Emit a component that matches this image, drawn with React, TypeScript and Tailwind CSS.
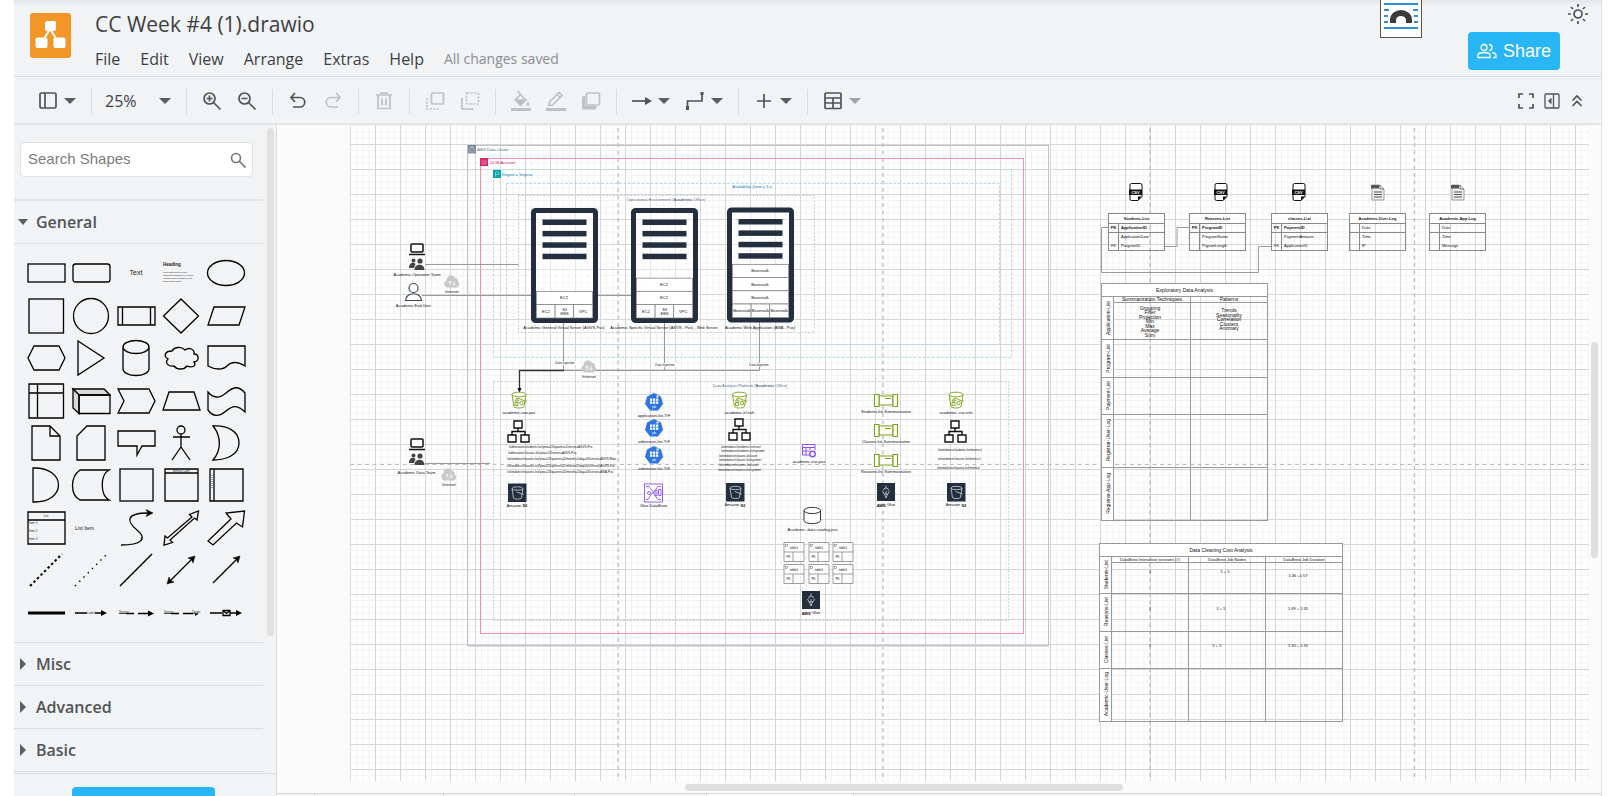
import React from "react";

const ui = "font-['Open_Sans','Noto_Sans',sans-serif]";
const arial = "font-['Liberation_Sans',Arial,sans-serif]";

/* ---------- toolbar ---------- */

function Caret({ muted = false }: { muted?: boolean }) {
  return (
    <svg width="12" height="6" viewBox="0 0 12 6" className={muted ? "text-[#a0a2a5]" : "text-[#5a5d61]"}>
      <path d="M0 0h12L6 6z" fill="currentColor" />
    </svg>
  );
}

function Sep() {
  return <div className="ml-2 mr-[7px] h-[25px] w-px shrink-0 bg-[#dadce0]" />;
}

function Tool({ label, muted = false, children }: { label: string; muted?: boolean; children: React.ReactNode }) {
  return (
    <button
      aria-label={label}
      className={`flex h-8 w-[35px] shrink-0 items-center justify-center ${muted ? "text-[#bfc1c3]" : "text-[#505357]"}`}
    >
      <svg width="20" height="20" viewBox="0 0 20 20" fill="none" stroke="currentColor" strokeWidth="1.7">
        {children}
      </svg>
    </button>
  );
}

function MenuTool({ label, muted = false, children }: { label: string; muted?: boolean; children: React.ReactNode }) {
  return (
    <button aria-label={label} className="flex h-8 w-[53px] shrink-0 items-center gap-[6px] pl-2 text-[#505357]">
      <svg width="20" height="20" viewBox="0 0 20 20" fill="none" stroke="currentColor" strokeWidth="1.7">
        {children}
      </svg>
      <Caret muted={muted} />
    </button>
  );
}

function Toolbar() {
  return (
    <div className="flex h-[48px] shrink-0 items-center border-b-2 border-[#e3e5e7] pl-4 pr-[17px] pt-[2px]">
      <MenuTool label="View">
        <rect x="2" y="2" width="16" height="15" rx="1.5" />
        <path d="M7 2v15" />
      </MenuTool>
      <Sep />
      <button className="flex h-8 w-[79px] shrink-0 items-center justify-between pl-[6px] pr-[7px] text-[16px] text-[#3c3f43]">
        25% <Caret />
      </button>
      <Sep />
      <Tool label="Zoom In">
        <circle cx="7.500" cy="7.500" r="5.500" />
        <path d="M11.500 11.500l7 7M4.500 7.500h6M7.500 4.500v6" />
      </Tool>
      <Tool label="Zoom Out">
        <circle cx="7.500" cy="7.500" r="5.500" />
        <path d="M11.500 11.500l7 7M4.500 7.500h6" />
      </Tool>
      <Sep />
      <Tool label="Undo">
        <path d="M7 2L3 6.500L7 11M3.500 6.500H12a4.500 4.500 0 0 1 0 9.500H5" />
      </Tool>
      <Tool label="Redo" muted>
        <path d="M13 2l4 4.500L13 11M16.500 6.500H8a4.500 4.500 0 0 0 0 9.500h7" />
      </Tool>
      <Sep />
      <Tool label="Delete" muted>
        <path d="M2 4h16M7 4V2h6v2M4 4v13.500h12V4M8 7.500v7M12 7.500v7" />
      </Tool>
      <Sep />
      <Tool label="To Front" muted>
        <rect x="6.500" y="2" width="12" height="11" rx="1" />
        <path d="M2 7v11h11.500" strokeDasharray="2 1.500" />
      </Tool>
      <Tool label="To Back" muted>
        <rect x="6.500" y="2" width="12" height="11" rx="1" strokeDasharray="2 1.500" />
        <path d="M2 7v11h11.500" />
      </Tool>
      <Sep />
      <Tool label="Fill Color" muted>
        <path d="M9.500 3.500l5 5.500-5 5-5-5z" />
        <path d="M4.500 9h10l-5 5z" fill="currentColor" />
        <path d="M10 4L6.500 0" />
        <path d="M17 10.500c1 1.500 1.500 2 1.500 3a1.500 1.500 0 0 1-3 0c0-1 .5-1.500 1.500-3z" fill="currentColor" stroke="none" />
        <path d="M0 18.500h20" strokeWidth="3" />
      </Tool>
      <Tool label="Line Color" muted>
        <path d="M3 14.500l.5-3.500L13 1.500l3 3-9.500 9.500zM11 3.500l3 3" />
        <path d="M0 18.500h20" strokeWidth="3" />
      </Tool>
      <Tool label="Shadow" muted>
        <rect x="5.500" y="2" width="13" height="12" rx="1.500" />
        <path d="M4.500 5H2.500a1.500 1.500 0 0 0-1.500 1.500V17a1.500 1.500 0 0 0 1.500 1.500H14a1.500 1.500 0 0 0 1.500-1.500v-2h-11z" fill="currentColor" stroke="none" />
      </Tool>
      <Sep />
      <MenuTool label="Connection">
        <path d="M0 10h15" />
        <path d="M13 6l7 4-7 4z" fill="currentColor" stroke="none" />
      </MenuTool>
      <MenuTool label="Waypoints">
        <path d="M2.500 16V10H17V3" />
        <path d="M1 15h3v4h-3zM15.500 1h3v3h-3z" fill="currentColor" stroke="none" />
      </MenuTool>
      <Sep />
      <MenuTool label="Insert">
        <path d="M10 3v14M3 10h14" />
      </MenuTool>
      <Sep />
      <MenuTool label="Table" muted>
        <rect x="2" y="2" width="16" height="15.500" rx="1" />
        <path d="M2 7h16M2 12h16M10 7v10.500" />
      </MenuTool>
      <div className="ml-auto flex items-center gap-[10px] text-[#505357]">
        <button aria-label="Fullscreen">
          <svg width="16" height="16" viewBox="0 0 16 16" fill="none" stroke="currentColor" strokeWidth="1.700">
            <path d="M1 5V1h4M11 1h4v4M15 11v4h-4M5 15H1v-4" />
          </svg>
        </button>
        <button aria-label="Format">
          <svg width="16" height="16" viewBox="0 0 16 16" fill="none" stroke="currentColor" strokeWidth="1.300">
            <rect x="1" y="1" width="14" height="14" rx="1" />
            <path d="M9.500 1v14" />
            <path d="M7.500 4.500v7L4 8z" fill="currentColor" stroke="none" />
          </svg>
        </button>
        <button aria-label="Collapse">
          <svg width="14" height="16" viewBox="0 0 14 16" fill="none" stroke="currentColor" strokeWidth="1.600">
            <path d="M2.500 7.500L7 3l4.500 4.500M2.500 13L7 8.500 11.500 13" />
          </svg>
        </button>
      </div>
    </div>
  );
}

/* ---------- header ---------- */

function Header() {
  return (
    <header className="relative flex h-[77px] shrink-0 border-b border-[#d9dbde] bg-linear-to-b from-[#e3e5e7] to-[#f1f3f5] to-8%">
      <svg width="41" height="45" viewBox="0 0 41 45" className="ml-4 mt-[13px] shrink-0">
        <rect width="41" height="45" rx="3" fill="#f29627" />
        <path d="M20 16L11.500 30M20 16l9 14" stroke="#fff" strokeWidth="2" />
        <rect x="15" y="8" width="11" height="10" rx="2" fill="#fff" />
        <rect x="5.500" y="24.500" width="12" height="10.500" rx="2" fill="#fff" />
        <rect x="23.500" y="24.500" width="12" height="10.500" rx="2" fill="#fff" />
      </svg>
      <div className="ml-6 flex flex-col pt-2 text-[#3c3f43]">
        <h1 className="text-[21px] leading-8">CC Week #4 (1).drawio</h1>
        <nav className="mt-[7px] flex items-center gap-5 text-[16px] leading-6">
          {["File", "Edit", "View", "Arrange", "Extras", "Help"].map((m) => (
            <button key={m}>{m}</button>
          ))}
          <span className="text-[14px] text-[#8a8d91]">All changes saved</span>
        </nav>
      </div>
      <div className="absolute right-[179px] top-0 flex h-[38px] w-[42px] justify-center border border-t-0 border-[#555] bg-white">
        <svg width="34" height="36" viewBox="0 0 34 36" fill="none">
          <path d="M0 4h34M0 10h5M29 10h5M0 16h4M30 16h4M0 22h4M30 22h4M0 28h34" stroke="#2f8fd3" strokeWidth="2" />
          <path d="M9 23v-3a8 7 0 0 1 16 0v3" stroke="#3b3b3b" strokeWidth="6" />
        </svg>
      </div>
      <button className={`ml-auto mt-8 flex h-[38px] w-[92px] shrink-0 items-center justify-center gap-[6px] rounded-[4px] bg-[#29b6f6] text-[18px] text-white ${arial}`}>
        <svg width="20" height="16" viewBox="0 0 20 16" fill="none" stroke="#fff" strokeWidth="1.300">
          <circle cx="7" cy="4.500" r="3" />
          <path d="M1 14.500V12c0-1.500 3-2.500 6-2.500s6 1 6 2.500v2.500zM12 1.500a3 3 0 0 1 0 6M15 9.500c2.500.5 4 1.500 4 2.500v2.500h-3" />
        </svg>
        Share
      </button>
      <button aria-label="Appearance" className="ml-2 mr-[13px] mt-1 h-5 w-5 shrink-0">
        <svg width="20" height="20" viewBox="0 0 20 20" fill="none" stroke="#505357" strokeWidth="1.700">
          <circle cx="10" cy="10" r="4" />
          <path d="M10 0v3M10 17v3M0 10h3M17 10h3M3 3l2 2M15 15l2 2M17 3l-2 2M5 15l-2 2" />
        </svg>
      </button>
    </header>
  );
}

/* ---------- shape palette ---------- */

const tiny = { fill: "#222", stroke: "none", fontFamily: "Liberation Sans, Arial, sans-serif" };

const shapes: [string, React.ReactNode][] = [
  ["Rectangle", <rect x="2" y="11" width="37" height="18" />],
  ["Rounded Rectangle", <rect x="2" y="11" width="37" height="18" rx="2.500" />],
  ["Text", <text x="20" y="22" fontSize="7" textAnchor="middle" {...tiny}>Text</text>],
  [
    "Textbox",
    <g {...tiny} fontSize="2">
      <text x="2" y="13" fontSize="4.500" fontWeight="bold">Heading</text>
      <text x="2" y="20">Lorem ipsum dolor sit amet</text>
      <text x="2" y="22.500">consectetur adipisicing elit, sed do</text>
      <text x="2" y="26">eiusmod tempor incididunt ut lab</text>
      <text x="2" y="28.500">dolore magna aliqua.</text>
    </g>,
  ],
  ["Ellipse", <ellipse cx="20" cy="20" rx="18.500" ry="12.500" />],
  ["Square", <rect x="3" y="3" width="34.500" height="34" />],
  ["Circle", <circle cx="20" cy="20" r="17.500" />],
  ["Process", <path d="M2 11h37v18H2zM6.500 11v18M34.500 11v18" />],
  ["Diamond", <path d="M20 3l17.500 17L20 37 2.500 20z" />],
  ["Parallelogram", <path d="M8 11h31l-6 18H2z" />],
  ["Hexagon", <path d="M8 8h25l6 12-6 12H8L2 20z" />],
  ["Triangle", <path d="M7 3l26 17L7 37z" />],
  ["Cylinder", <path d="M7 9a13 6.500 0 0 1 26 0v22a13 6.500 0 0 1-26 0zM7 9a13 6.500 0 0 0 26 0" />],
  ["Cloud", <path d="M11 13c-7 0-9 5-4 8-4 4 1 8 6 7 3 4 10 4 13 0 5 2 10 0 7-4 6-1 5-8 0-8 1-5-5-7-9-4-4-4-11-3-13 1z" />],
  ["Document", <path d="M2 8h37v20c-8-5-14-4-18 0s-12 4-19 0z" />],
  ["Internal Storage", <path d="M3 3h34.500v34H3zM3 12h34.500M11.500 3v34" />],
  ["Cube", <g><path d="M2 8h31l6 6H8z" fill="#d8dadc" /><path d="M2 8l6 6v18.500L2 27z" fill="#d8dadc" /><path d="M8 14h31v18.500H8z" /></g>],
  ["Step", <path d="M2 8h31l6 12-6 12H2l6-12z" />],
  ["Trapezoid", <path d="M8 11h25l6 18H2z" />],
  ["Tape", <path d="M2 11c5 6 11 7 18 1s12-8 19 0v19c-7-7-12-7-19-1s-13 6-18-1z" />],
  ["Note", <path d="M6 3h18l10 10v24H6zM24 3v10h10" />],
  ["Card", <path d="M16 3h18v34H6V13z" />],
  ["Callout", <path d="M2 8h37v15H26l-5 9v-9H2z" />],
  ["Actor", <path d="M16 7a4 4 0 1 0 8 0a4 4 0 1 0-8 0zM20 11v13M12 14h17M20 24l-9 13M20 24l9 13" />],
  ["Or", <path d="M7 3c14-1 26 5 26 17S20 37 7 37c8-9 9-23 0-34z" />],
  ["And", <path d="M7 3c34-1 34 35 0 34z" />],
  ["Data Storage", <path d="M9 5h29c-9 5-9 25 0 30H9C-1 30-1 12 9 5z" />],
  ["Container", <rect x="4" y="4" width="33" height="32" />],
  [
    "Vertical Container",
    <g><path d="M4 4h33v32H4zM4 8h33" /><text x="20" y="7" fontSize="3" textAnchor="middle" {...tiny}>Vertical Cont</text></g>,
  ],
  ["Horizontal Container", <g><path d="M4 4h33v32H4zM8 4v32" /><path d="M6 10v14" strokeWidth=".6" strokeDasharray="1 1" /></g>],
  [
    "List",
    <g>
      <path d="M2 4h37v32H2zM2 12h37" />
      <g {...tiny} fontSize="3">
        <text x="20" y="9" textAnchor="middle">List</text>
        <text x="3" y="16">Item 1</text>
        <text x="3" y="24">Item 2</text>
        <text x="3" y="32">Item 3</text>
      </g>
    </g>,
  ],
  ["List Item", <text x="4" y="22" fontSize="5" {...tiny}>List Item</text>],
  ["Curve", <g><path d="M5 37c20 0 27-6 16-15S10 5 32 5" /><path d="M37 5l-7-3.500 2 3.500-2 3.500z" fill="#000" strokeWidth=".5" /></g>],
  ["Bidirectional Arrow", <path d="M3 37l1-9 2.500 2L31 9l-2.500-2.500 9-3.500-1.500 9-2.500-2L9 32l2.500 2.500z" />],
  ["Arrow", <path d="M2 33L25 11l-5-6 18.500-2-2 16-6-4L7 37z" />],
  ["Dashed Line", <path d="M4 36L36 4" strokeDasharray="2.500 2.500" strokeWidth="2" />],
  ["Dotted Line", <path d="M4 36L36 4" strokeDasharray="1.500 4.500" />],
  ["Line", <path d="M4 36L36 4" strokeWidth="1.500" />],
  ["Bidirectional Connector", <g><path d="M8 32L32 8" /><path d="M34 6l-2 7-1.500-3.500L27 8zM6 34l2-7 1.500 3.500L13 32z" fill="#000" strokeWidth=".5" /></g>],
  ["Directional Connector", <g><path d="M7 33L32 8" /><path d="M34 6l-2 7-1.500-3.500L27 8z" fill="#000" strokeWidth=".5" /></g>],
  ["Link", <path d="M2 20h37" strokeWidth="3" />],
  ["Connector with Label", <g><path d="M4 20h12M24 20h8" strokeWidth="1.600" /><path d="M36 20l-6-3v6z" fill="#000" stroke="none" /><text x="20" y="21" fontSize="3" textAnchor="middle" {...tiny}>Label</text></g>],
  ["Connector with 2 Labels", <g><path d="M10 20.500h8M22 20.500h10" strokeWidth="1.600" /><path d="M3 20.500h7" strokeWidth=".7" /><path d="M38 20.500l-6-3v6z" fill="#000" stroke="none" /><text x="3" y="19.500" fontSize="3" {...tiny}>Source</text></g>],
  ["Connector with 3 Labels", <g><path d="M10 20.500h8M22 20.500h10" strokeWidth="1.600" /><path d="M3 20.500h7M32 20.500h5" strokeWidth=".7" /><path d="M38 20.500l-4 2.500v-2z" fill="#000" stroke="none" /><g {...tiny} fontSize="3"><text x="3" y="19.500">Source</text><text x="31" y="19.500">Target</text></g></g>],
  ["Connector with Symbol", <g><path d="M4 20h12M24 20h8" strokeWidth="1.600" /><path d="M36 20l-6-3v6z" fill="#000" stroke="none" /><path d="M17 17.500h7v5h-7zM17 17.500l3.500 3 3.500-3" /></g>],
];

function Section({ title }: { title: string }) {
  return (
    <button className="flex h-[43px] w-[249px] items-center border-b border-[#dadce0] pl-[6px] text-left text-[16px] font-semibold text-[#505357]">
      <svg width="6" height="12" viewBox="0 0 6 12" className="mr-[10px]">
        <path d="M0 0v12l6-6z" fill="#5a5d61" />
      </svg>
      {title}
    </button>
  );
}

function Sidebar() {
  return (
    <aside className="flex w-[263px] shrink-0 flex-col overflow-hidden border-r border-[#dadce0]">
      <div className="flex h-[648px] shrink-0 justify-between">
        <div className="w-[249px]">
          <div className="h-[76px] border-b-2 border-[#e1e3e5] pl-[6px] pt-[17px]">
            <div className="flex h-[35px] w-[233px] items-center rounded-[4px] border border-[#dfe1e3] bg-white pl-[7px] pr-[6px]">
              <input
                aria-label="Search Shapes"
                placeholder="Search Shapes"
                className={`min-w-0 flex-1 bg-transparent text-[15px] placeholder:text-[#7b7d80] ${arial}`}
              />
              <svg width="16" height="16" viewBox="0 0 16 16" fill="none" stroke="#777a7d" strokeWidth="1.700">
                <circle cx="6" cy="6" r="4.500" />
                <path d="M9.500 9.500l6 6" />
              </svg>
            </div>
          </div>
          <button className="flex h-[43px] w-full items-center border-b border-[#dadce0] pl-1 text-left text-[16px] font-semibold text-[#505357]">
            <svg width="10" height="6" viewBox="0 0 10 6" className="mr-2">
              <path d="M0 0h10L5 6z" fill="#5a5d61" />
            </svg>
            General
          </button>
          <div className="grid h-[399px] grid-cols-[repeat(5,45px)] grid-rows-9 border-b border-[#dadce0] pb-2 pl-[9px] pt-2">
            {shapes.map(([name, art]) => (
              <button key={name} aria-label={name} className="flex items-center justify-center">
                <svg width="40" height="40" viewBox="0 0 40 40" fill="none" stroke="#000" strokeWidth="1.300">
                  {art}
                </svg>
              </button>
            ))}
          </div>
          <Section title="Misc" />
          <Section title="Advanced" />
          <Section title="Basic" />
        </div>
        <div className="mr-[2px] mt-[3px] h-[508px] w-[7px] rounded-full bg-[#e0e0e1]" />
      </div>
      <div className="flex flex-1 justify-center border-t border-[#dadce0] pr-1 pt-[13px]">
        <button aria-label="More Shapes" className="h-9 w-[143px] shrink-0 rounded-[4px] bg-[#29b6f6]" />
      </div>
    </aside>
  );
}

/* ---------- diagram drawing ---------- */

function T({
  x,
  y,
  s,
  size = 4,
  start = false,
  bold = false,
  fill = "#111",
}: {
  x: number;
  y: number;
  s: React.ReactNode;
  size?: number;
  start?: boolean;
  bold?: boolean;
  fill?: string;
}) {
  return (
    <text x={x} y={y} fontSize={size} fill={fill} stroke="none" fontWeight={bold ? 700 : 400} textAnchor={start ? "start" : "middle"} dominantBaseline="central">
      {s}
    </text>
  );
}

function Server({ x, y, rows, cells, label }: { x: number; y: number; rows: string[]; cells: string[]; label: string }) {
  return (
    <g>
      <rect x={x + 2.5} y={y + 2.5} width="62" height="110" rx="2" fill="#fff" fillOpacity=".4" stroke="#232f3e" strokeWidth="5" />
      {[0, 1, 2, 3].map((i) => (
        <rect key={i} x={x + 11.5} y={y + 11.5 + i * 11.4} width="44" height="5.500" fill="#232f3e" />
      ))}
      {rows.map((r, i) => (
        <g key={i}>
          <rect x={x + 5.5} y={y + 96.5 - (rows.length - i) * 13.2} width="56" height="13.200" fill="#fff" stroke="#777" strokeWidth=".7" />
          <T x={x + 33} y={y + 103 - (rows.length - i) * 13.2} s={r} />
        </g>
      ))}
      {cells.map((c, i) => (
        <g key={i}>
          <rect x={x + 5.5 + i * 18.6} y={y + 96.5} width="18.600" height="13.500" fill="#fff" stroke="#777" strokeWidth=".7" />
          {c.split("\n").map((l, j, a) => (
            <T key={j} x={x + 15 + i * 18.6} y={y + 103 + j * 4 - (a.length - 1) * 2} s={l} />
          ))}
        </g>
      ))}
      <T x={x + 33} y={y + 119.5} s={label} />
    </g>
  );
}

function Laptop({ x, y }: { x: number; y: number }) {
  return (
    <g transform={`translate(${x} ${y})`}>
      <rect x="2" y="1" width="12" height="8" rx="1" fill="#fff" stroke="#111" strokeWidth="1.500" />
      <path d="M0 11.500h16" stroke="#111" strokeWidth="1.500" />
      <g fill="#444">
        <circle cx="4.500" cy="17.500" r="2" />
        <circle cx="11" cy="18" r="2.600" />
        <path d="M0 25c0-6 5-6 6.500-4L5 25zM5.500 27c0-7 10-7 10 0z" />
      </g>
    </g>
  );
}

function Cloud({ x, y }: { x: number; y: number }) {
  return (
    <g transform={`translate(${x} ${y})`}>
      <path d="M-5 5a3.500 3.500 0 0 1 0-6.500a4 4 0 0 1 7.500-2.500a3.500 3.500 0 0 1 3 4A2.800 2.800 0 0 1 5 5z" fill="#c9c9c9" stroke="#c9c9c9" />
      <path d="M-2 3v-4M-3.500 .5L-2-1l1.500 1.500M2-1v4M.5 1.500L2 3l1.500-1.500" fill="none" stroke="#fff" strokeWidth=".8" />
      <T x={0} y={9} s="Internet" />
    </g>
  );
}

function Bucket({ x, y, label }: { x: number; y: number; label: string }) {
  return (
    <g transform={`translate(${x} ${y})`} fill="none" stroke="#7aa116" strokeWidth=".9">
      <ellipse cx="0" cy="-5.500" rx="7" ry="2.300" fill="#fff" />
      <path d="M-7-5.500L-5 6.500c1 2 9 2 10 0l2-12M-1-2l8 3.500.500-1" />
      <path d="M-4 1l2-3 1.500 3zM-4 2.500h3v3h-3z" />
      <circle cx="2.500" cy="3" r="1.700" />
      <T x={0} y={12} s={label} />
    </g>
  );
}

function Tree({ x, y }: { x: number; y: number }) {
  return (
    <g transform={`translate(${x} ${y})`} fill="#fff" stroke="#111" strokeWidth="1.400">
      <path d="M11 8v4M5 15v-3.500h13V15" fill="none" />
      <path d="M7 1h8v7H7zM1 15h8v7H1zM14 15h8v7h-8z" />
    </g>
  );
}

function S3({ x, y }: { x: number; y: number }) {
  return (
    <g transform={`translate(${x} ${y})`}>
      <rect width="18.500" height="18.500" fill="#232f3e" />
      <g fill="none" stroke="#e6e9ec" strokeWidth=".7">
        <ellipse cx="9.500" cy="5" rx="5.500" ry="1.700" />
        <path d="M4 5l1.500 9.500c1 1.500 7 1.500 8 0L15 5M8.500 8.500l7 2.500" />
      </g>
      <T x={9} y={21.5} s={<>Amazon <tspan fontWeight="700">S3</tspan></>} />
    </g>
  );
}

function Glue({ x, y }: { x: number; y: number }) {
  return (
    <g transform={`translate(${x} ${y})`}>
      <rect width="18" height="18" fill="#232f3e" />
      <path d="M9 2.500v2.500M6.500 7.500a2.500 2.500 0 0 1 5 0M5.500 8l1.500 3h4l1.500-3M7.500 11L9 15l1.500-4M9 8v3" fill="none" stroke="#e6e9ec" strokeWidth=".7" />
      <T x={9} y={21.5} s={<><tspan fontWeight="700">AWS</tspan> Glue</>} />
    </g>
  );
}

function Job({ y, label }: { y: number; label: string }) {
  return (
    <g transform={`translate(654 ${y})`}>
      <path d="M0-9l7 3.500L9 2 4 8.500H-4L-9 2l2-7.500z" fill="#2f74e3" />
      <g fill="#fff">
        {[-4, -1, 2].map((c) => [-3.500, -0.500].map((r) => <rect key={`${c}${r}`} x={c} y={r} width="2.300" height="2.300" />))}
        <rect x="2.500" y="-6.500" width="2" height="2" />
      </g>
      <T x={0} y={5} s="job" size={3} fill="#fff" />
      <T x={0} y={13} s={label} />
    </g>
  );
}

function Pipe({ y, label }: { y: number; label: string }) {
  return (
    <g transform={`translate(874 ${y})`} fill="#fff" stroke="#7aa116" strokeWidth="1.100">
      <path d="M5 2h14v9H5z" />
      <path d="M.5 .5h4.500v12H.5zM19 .5h4.500v12H19zM11 4.500h6" />
      <T x={12} y={17} s={label} />
    </g>
  );
}

function MiniTable({ x, y }: { x: number; y: number }) {
  return (
    <g transform={`translate(${x} ${y})`}>
      <path d="M0 0h20v19H0zM0 9.500h20M9 9.500V19" fill="#fff" fillOpacity=".7" stroke="#777" strokeWidth=".7" />
      <rect x="1.500" y="2" width="2" height="2" stroke="#666" strokeWidth=".5" />
      <T x={10} y={5} s="table1" size={3} />
      <T x={4.500} y={14.500} s="PK" size={3} />
    </g>
  );
}

function Csv({ x }: { x: number }) {
  return (
    <g transform={`translate(${x} 183)`}>
      <path d="M1 2q0-1.500 1.500-1.500h9q1.500 0 1.500 1.500v11.500l-4 4H2.500Q1 17.500 1 16z" fill="#fff" stroke="#111" />
      <rect y="6.500" width="13" height="5.500" fill="#111" />
      <path d="M9 17.500v-4h4z" fill="#111" />
      <T x={6.500} y={9.500} s="CSV" size={4} fill="#fff" bold />
    </g>
  );
}

function LogFile({ x }: { x: number }) {
  return (
    <g transform={`translate(${x} 184)`}>
      <path d="M1 1h8l4 4v11H1z" fill="#eee" stroke="#888" strokeWidth=".8" />
      <path d="M9 1v4h4" fill="none" stroke="#555" strokeWidth=".8" />
      <rect y="1" width="8" height="3.500" fill="#555" />
      <path d="M3 8h8M3 10.500h8M3 13h8" stroke="#555" strokeWidth="1.100" />
    </g>
  );
}

const pathsRaw: [number, number, string][] = [
  [509, 447, "/admissions/students-list/year=23/quarter=1/server=AGVS-Pus"],
  [508, 453, "/admissions/classes-list/year=23/server=AGVS-Pus"],
  [507, 459, "/attendance/reasons-list/year=23/quarter=01/month=1/day=03/server=AGVS-Main"],
  [507, 466, "/attendance/reasons-list/year=23/quarter=01/month=1/day=03/server=AGVS-Pus"],
  [507, 472, "/attendance/reasons-list/year=23/quarter=01/month=2/day=03/server=AWA-Pus"],
  [721, 447, "/attendance/students-list/user/"],
  [721, 451, "/attendance/students-list/system/"],
  [719, 456, "/attendance/classes-list/user/"],
  [719, 460, "/attendance/classes-list/system/"],
  [719, 465, "/attendance/reasons-list/user/"],
  [718, 470, "/attendance/reasons-list/system/"],
  [938, 450, "/attendance/students-list/metrics/"],
  [938, 459, "/attendance/classes-list/metrics/"],
  [937, 468, "/attendance/reasons-list/metrics/"],
];

function Drawing() {
  return (
    <svg width="1326" height="668" viewBox="277 125 1326 668" fill="none" className="absolute left-0 top-0" fontFamily="Liberation Sans, Arial, sans-serif">
      <defs>
        <pattern id="grid" x="375" y="144" width="25" height="25" patternUnits="userSpaceOnUse">
          <path d="M6.500 0v25M13 0v25M19 0v25M0 6.500h25M0 13h25M0 19h25" stroke="#f3f3f3" />
          <path d="M.5 0v25M0 .5h25" stroke="#d6d6d6" />
        </pattern>
      </defs>
      <rect x="350" y="125" width="1239" height="656" fill="#fff" />
      <rect x="350" y="125" width="1239" height="656" fill="url(#grid)" />
      <path d="M350.500 125v656" stroke="#dcdcdc" />
      <path d="M618 128v653M883 128v653M1150 128v653M1414.500 128v653" stroke="#bdbdbd" strokeWidth="1.300" strokeDasharray="4 3.500" />
      <path d="M350 464.500h1239" stroke="#bdbdbd" strokeDasharray="4 3.500" />

      <rect x="467.500" y="145.500" width="581" height="500" stroke="#bdc3ca" />
      <path d="M468 646.500h581" stroke="#dde1e5" />
      <rect x="480.500" y="158.500" width="543" height="475" stroke="#ea94ae" />
      <rect x="493.500" y="169.500" width="518" height="188" stroke="#b3e2e2" strokeDasharray="3 1.500" />
      <rect x="506.500" y="183.500" width="493" height="161" stroke="#b9daee" strokeDasharray="3 1.500" />
      <rect x="518.500" y="195.500" width="296" height="137" stroke="#cbd0dc" strokeDasharray="2 1.500" />
      <rect x="493.500" y="381.500" width="515" height="239" stroke="#cbd0dc" strokeDasharray="2 1.500" />

      <rect x="468" y="145" width="8" height="8.500" fill="#7d8998" />
      <path d="M470 152v-4h4v4zM471 148v-1.500h2v1.500" stroke="#c3cad2" strokeWidth=".6" />
      <rect x="480" y="158" width="8" height="8" fill="#d6246e" />
      <path d="M482 160v4h4v-4M484 160v3" stroke="#f3b3cd" strokeWidth=".6" />
      <rect x="493" y="170" width="8" height="8" fill="#00a4a6" />
      <path d="M495.500 177v-5h3.500v2.500h-3.500" stroke="#b3e6e6" strokeWidth=".6" />
      <T x={477} y={149} s="AWS Data Center" start fill="#5a6c86" />
      <T x={490} y={162} s="UCW-Account" start fill="#cd2264" />
      <T x={502} y={174} s="Region = Virginia" start fill="#147eba" />
      <T x={752} y={186} s="Availability Zone  = 1-a" fill="#147eba" />
      <T x={666} y={199} s={<>Operational Environment (<tspan fontWeight="700">Academic</tspan> Office)</>} fill="#5a6c86" />
      <T x={750} y={385} s={<>Data Analysis Platform (<tspan fontWeight="700">Academic</tspan> Office)</>} fill="#5a6c86" />

      <g stroke="#999">
        <path d="M425 264.500h93.500M422 295.500h109M598 295.500h33M425 463.500h65" />
        <path d="M563.500 322v48.500M664.500 322v48.500M759.500 322v48.500H564" />
        <path d="M564 370.500h-44.500V389" stroke="#333" strokeWidth="1.300" />
        <path d="M519.500 393l-2-5h4z" fill="#111" stroke="none" />
        <path d="M1164.500 246.500h12.500v-19h12.500M1108 227.500h-6.500v45h157v-26H1271" />
      </g>
      <g fill="#fff">
        <rect x="553" y="361" width="24" height="4" />
        <rect x="653" y="363" width="24" height="4" />
        <rect x="747" y="363" width="24" height="4" />
      </g>
      <T x={565} y={363} s="Data Ingestion" size={3} />
      <T x={665} y={365} s="Data Ingestion" size={3} />
      <T x={759} y={365} s="Data Ingestion" size={3} />

      <Laptop x={409} y={243} />
      <T x={417} y={274} s="Academic Operation Team" />
      <g stroke="#3a4657" fill="#fff" strokeWidth="1.200">
        <circle cx="413.500" cy="288" r="4.500" />
        <path d="M405.500 300.500c0-9 16-9 16 0z" />
      </g>
      <T x={413.5} y={305} s="Academic End User" />
      <Laptop x={409} y={438} />
      <T x={416.5} y={472} s="Academic Data Team" />
      <Cloud x={452} y={282} />
      <Cloud x={589} y={367} />
      <Cloud x={449} y={475} />

      <Server x={531} y={208} rows={["EC2"]} cells={["EC2", "S3\nEBS", "VPC"]} label="Academic General Virtual Server (AGVS-Pus)" />
      <Server x={631} y={208} rows={["EC2", "EC2"]} cells={["EC2", "S3\nEBS", "VPC"]} label="Academic Specific Virtual Server (ASVS - Pus) - Web Server" />
      <Server x={727} y={207.5} rows={["Beanstalk", "Beanstalk", "Beanstalk"]} cells={["Beanstalk", "Beanstalk", "Beanstalk"]} label="Academic Web Application (AWA - Pus)" />

      <Bucket x={519} y={400} label="academic-raw-pus" />
      <Bucket x={739.5} y={400} label="academic-irf-nsh" />
      <Bucket x={956} y={400} label="academic -cur-nsh" />
      <Tree x={507} y={420} />
      <Tree x={728} y={418} />
      <Tree x={944} y={420} />
      {pathsRaw.map(([x, y, s]) => (
        <T key={y + s} x={x} y={y} s={s} size={3} start />
      ))}
      <Job y={402} label="application-list-TrF" />
      <Job y={428} label="admission-list-TrF" />
      <Job y={455} label="admission-list-TrF" />
      <S3 x={508} y={483.500} />
      <S3 x={726} y={483} />
      <S3 x={947} y={483} />
      <g transform="translate(644 483.500)" stroke="#8c4fff" strokeWidth=".9">
        <rect x=".5" y=".5" width="18" height="18" fill="#fff" />
        <path d="M2 3h3l5 6.500h-2L4 16H2M17 3h-3L9.500 9M17 16h-3L9.500 10M11 7h2v5h-2zM14.500 6h2.500v6h-2.500z" />
        <circle cx="5" cy="9.500" r="1.500" />
        <T x={9.500} y={22} s="Glue DataBrew" />
      </g>
      <Pipe y={394} label="Students-list Summarization" />
      <Pipe y={424} label="Classes-list Summarization" />
      <Pipe y={454} label="Reasons-list Summarization" />
      <Glue x={877} y={483} />
      <Glue x={802} y={591} />
      <g transform="translate(802 444)" stroke="#8c4fff">
        <path d="M8 11H.5V.5H13V6M.5 3.500H13M4 3.500V11M8 3.500v3M.5 7H7" fill="#fff" />
        <circle cx="10.500" cy="10" r="2.700" fill="#fff" strokeWidth="1.500" />
        <T x={7} y={17.500} s="academic-crw-pus" />
      </g>
      <path d="M804 510.500a8 3 0 0 1 16.500 0v10a8 3 0 0 1-16.500 0zM804 510.500a8 3 0 0 0 16.500 0" fill="#fff" stroke="#333" />
      <T x={812.5} y={529.5} s="Academic -data-catalog-pus" />
      {[784, 809, 833].map((x) => (
        <g key={x}>
          <MiniTable x={x} y={542.500} />
          <MiniTable x={x} y={564.500} />
        </g>
      ))}
      {[1129, 1214, 1292].map((x) => (
        <Csv key={x} x={x} />
      ))}
      <LogFile x={1371} />
      <LogFile x={1451} />
    </svg>
  );
}

/* ---------- diagram tables ---------- */

function Entity({ at, title, rows, keyed = true }: { at: string; title: string; rows: [string, string][]; keyed?: boolean }) {
  const strong = keyed ? "font-bold" : "";
  return (
    <table className={`absolute top-[88px] w-[57px] table-fixed border-collapse border border-[#888] text-[4px] leading-[4px] ${at}`}>
      <colgroup>
        <col className="w-[10px]" />
        <col />
      </colgroup>
      <thead>
        <tr className="h-[10px]">
          <th colSpan={2} className="border border-[#888] bg-white p-0">{title}</th>
        </tr>
      </thead>
      <tbody>
        {rows.map(([k, v], i) => (
          <tr key={v} className={i === 0 ? "h-[9px] border-b border-[#888]" : "h-[9px]"}>
            <td className={`border-r border-[#888] p-0 text-center ${i === 0 ? strong : ""}`}>{k}</td>
            <td className={`p-0 pl-[2px] ${i === 0 ? strong : ""}`}>{v}</td>
          </tr>
        ))}
      </tbody>
    </table>
  );
}

const cell = "border border-[#999] p-0";

function RowHead({ children, span = 1 }: { children: string; span?: number }) {
  return (
    <th rowSpan={span} className={`${cell} bg-white font-normal`}>
      <span className="inline-block rotate-180 text-[5px] leading-[6px] [writing-mode:vertical-rl]">{children}</span>
    </th>
  );
}

function Lines({ items, box }: { items: string[]; box: string }) {
  return (
    <div className={`flex flex-col items-center justify-between text-[5px] leading-[4px] ${box}`}>
      {items.map((i) => (
        <span key={i}>{i}</span>
      ))}
    </div>
  );
}

function ExploratoryTable() {
  return (
    <table className="absolute left-[824px] top-[158px] w-[167px] table-fixed border-collapse text-[4px] leading-[4px]">
      <colgroup>
        <col className="w-[12px]" />
        <col />
        <col />
      </colgroup>
      <tbody>
        <tr className="h-[13px]">
          <th colSpan={3} className={`${cell} bg-white text-[5px] leading-[5px] font-normal`}>Exploratory Data Analysis</th>
        </tr>
        <tr className="h-[6px]">
          <RowHead span={2}>Application-List</RowHead>
          <th className={`${cell} text-[5px] leading-[5px] font-normal`}>Summarization Techniques</th>
          <th className={`${cell} text-[5px] leading-[5px] font-normal`}>Patterns</th>
        </tr>
        <tr className="h-[37px]">
          <td className={cell}>
            <Lines box="h-[31px] pr-1" items={["Grouping", "Filter", "Projection", "Min", "Max", "Average", "Sum"]} />
          </td>
          <td className={`${cell} align-top`}>
            <Lines box="mt-[5px] h-[22px]" items={["Trends", "Seasonality", "Correlation", "Clusters", "Anomaly"]} />
          </td>
        </tr>
        <tr className="h-[38px]"><RowHead>Program-List</RowHead><td className={cell} /><td className={cell} /></tr>
        <tr className="h-[37px]"><RowHead>Payment-List</RowHead><td className={cell} /><td className={cell} /></tr>
        <tr className="h-[53px]"><RowHead>Registrar-User-Log</RowHead><td className={cell} /><td className={cell} /></tr>
        <tr className="h-[53px]"><RowHead>Registrar-App-Log</RowHead><td className={cell} /><td className={cell} /></tr>
      </tbody>
    </table>
  );
}

function CostTable() {
  const c = `${cell} text-center`;
  return (
    <table className="absolute left-[822px] top-[418px] w-[244px] table-fixed border-collapse text-[4px] leading-[4px]">
      <colgroup>
        <col className="w-[12px]" />
        <col />
        <col />
        <col />
      </colgroup>
      <tbody>
        <tr className="h-[13px]">
          <th colSpan={4} className={`${cell} bg-white text-[5px] leading-[5px] font-normal`}>Data Cleaning Cost Analysis</th>
        </tr>
        <tr className="h-[6px]">
          <RowHead span={2}>Students-List</RowHead>
          <th className={`${cell} font-normal`}>DataBrew Interactive sessions (#)</th>
          <th className={`${cell} font-normal`}>DataBrew Job Nodes</th>
          <th className={`${cell} font-normal`}>DataBrew Job Duration</th>
        </tr>
        <tr className="h-[31px]"><td className={`${c} pb-3`}>1</td><td className={`${c} pb-3 pr-1`}>5 + 5</td><td className={`${c} pb-1 pr-3`}>1:46 +1:57</td></tr>
        <tr className="h-[38px]"><RowHead>Reasons-List</RowHead><td className={`${c} pb-2`}>1</td><td className={`${c} pb-2 pr-3`}>5 + 5</td><td className={`${c} pb-2 pr-3`}>1:49 + 1:35</td></tr>
        <tr className="h-[37px]"><RowHead>Classes-List</RowHead><td className={`${c} pb-2`}>1</td><td className={`${c} pb-2 pr-5`}>5 + 5</td><td className={`${c} pb-2 pr-3`}>1:30 + 1:35</td></tr>
        <tr className="h-[53px]"><RowHead>Academic-User-Log</RowHead><td className={c} /><td className={c} /><td className={c} /></tr>
      </tbody>
    </table>
  );
}

function Canvas() {
  return (
    <main className={`flex min-w-0 flex-1 flex-col overflow-hidden bg-[#fbfbfb] text-[#111] ${arial}`}>
      <div className="relative min-h-0 flex-1 overflow-hidden">
        <Drawing />
        <Entity at="left-[831px]" title="Students-List" rows={[["PK", "ApplicationID"], ["", "ApplicationDate"], ["FK", "ProgramID"]]} />
        <Entity at="left-[912px]" title="Reasons-List" rows={[["PK", "ProgramID"], ["", "ProgramName"], ["", "PrgramLength"]]} />
        <Entity at="left-[994px]" title="classes-List" rows={[["PK", "PaymentID"], ["", "PaymentAmount"], ["FK", "ApplicationID"]]} />
        <Entity at="left-[1072px]" title="Academic-User-Log" keyed={false} rows={[["", "Date"], ["", "Time"], ["", "IP"]]} />
        <Entity at="left-[1152px]" title="Academic-App-Log" keyed={false} rows={[["", "Date"], ["", "Time"], ["", "Message"]]} />
        <ExploratoryTable />
        <CostTable />
        <div className="absolute right-[3px] top-[217px] h-[216px] w-[7px] rounded-full bg-[#dfdfdf]" />
        <div className="absolute bottom-[2px] left-[408px] h-[7px] w-[438px] rounded-full bg-[#dfdfdf]" />
      </div>
      <div className="flex h-[3px] shrink-0 border-t border-[#d5d7d9] bg-[#f1f3f5]">
        <div className="w-[38px] border-r border-[#d5d7d9]" />
        <div className="w-[129px] border-r border-[#d5d7d9]" />
        <div className="w-[131px] border-r border-[#d5d7d9]" />
        <div className="w-[132px] border-r border-[#d5d7d9]" />
        <div className="w-[147px] border-r border-[#d5d7d9] bg-white" />
      </div>
    </main>
  );
}

export default function App() {
  return (
    <div className={`h-screen overflow-hidden bg-white pl-[14px] pr-[7px] ${ui}`}>
      <div className="flex h-full flex-col border-r border-[#dfe1e3] bg-[#f1f3f5]">
        <Header />
        <Toolbar />
        <div className="flex min-h-0 flex-1">
          <Sidebar />
          <Canvas />
        </div>
      </div>
    </div>
  );
}
